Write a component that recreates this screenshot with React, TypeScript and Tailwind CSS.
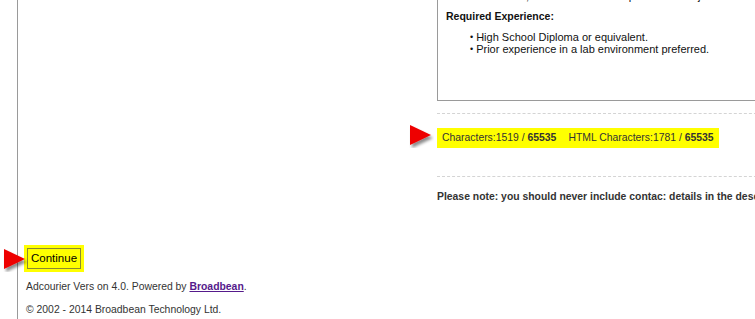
import React from "react";

function RedArrow({ className }: { className: string }) {
  return (
    <svg
      className={className}
      width="25"
      height="23"
      viewBox="0 0 25 23"
    >
      <defs>
        <filter id="sh" x="-30%" y="-30%" width="160%" height="160%">
          <feDropShadow dx="2" dy="3" stdDeviation="1.4" floodColor="#000" floodOpacity="0.45" />
        </filter>
      </defs>
      <polygon points="1,0 22,10 1,20" fill="#ee0000" filter="url(#sh)" />
    </svg>
  );
}

export default function App() {
  return (
    <div className="relative w-[755px] h-[319px] overflow-hidden bg-white font-['Liberation_Sans',Arial,sans-serif] text-[10.4px] text-[#333]">
      <div className="ml-[17px] h-full border-l border-[#9a9a9a] pl-[8px]">
        <div className="flex">
          <div className="w-[411px] shrink-0" />
          <div className="min-w-0 flex-1">
            {/* description box */}
            <div className="h-[101px] w-[360px] overflow-hidden border-b border-l border-[#9a9a9a]">
              <div className="-mt-[10px] pl-[8px] text-[11px] leading-[13px] text-[#111]">
                <p className="whitespace-nowrap">
                  Maintain a clean, safe work area and perform other job duties as assigned.
                </p>
                <p className="mt-[7px] text-[10.5px] font-bold">Required Experience:</p>
                <ul className="mt-[8px] pl-[24px] leading-[12px]">
                  <li className="flex items-center gap-[3px]">
                    <span className="text-[9px]">•</span>
                    <span>High School Diploma or equivalent.</span>
                  </li>
                  <li className="flex items-center gap-[3px]">
                    <span className="text-[9px]">•</span>
                    <span>Prior experience in a lab environment preferred.</span>
                  </li>
                </ul>
              </div>
            </div>

            <div className="mt-[12px] w-[330px] border-t border-dashed border-[#d4d4d4]" />

            <div className="relative mt-[14px]">
              <RedArrow className="absolute -left-[28px] -top-[3px]" />
              <div className="inline-flex h-[20px] items-center whitespace-nowrap bg-[#ffff00] px-[5px] text-[#333]">
                <span>
                  Characters:1519 / <b>65535</b>
                </span>
                <span className="ml-[12px]">
                  HTML Characters:1781 / <b>65535</b>
                </span>
              </div>
            </div>

            <div className="mt-[28px] w-[330px] border-t border-dashed border-[#d4d4d4]" />

            <p className="mt-[13px] whitespace-nowrap font-bold leading-[13px] text-[#333]">
              Please note: you should never include contac: details in the description
            </p>
          </div>
        </div>

        <div className="relative mt-[42px]">
          <RedArrow className="absolute -left-[23px] top-[4px]" />
          <div className="-ml-[2px] inline-block bg-[#ffff00] p-[3px]">
            <button className="h-[21px] border border-[#8a8a30] px-[3px] text-[11.5px] leading-[19px] text-black">
              Continue
            </button>
          </div>
        </div>

        <p className="mt-[8px] leading-[13px]">
          Adcourier Vers on 4.0. Powered by{" "}
          <a href="#" className="font-bold text-[#551a8b] underline">
            Broadbean
          </a>
          .
        </p>
        <p className="mt-[10px] leading-[13px]">© 2002 - 2014 Broadbean Technology Ltd.</p>
      </div>
    </div>
  );
}
